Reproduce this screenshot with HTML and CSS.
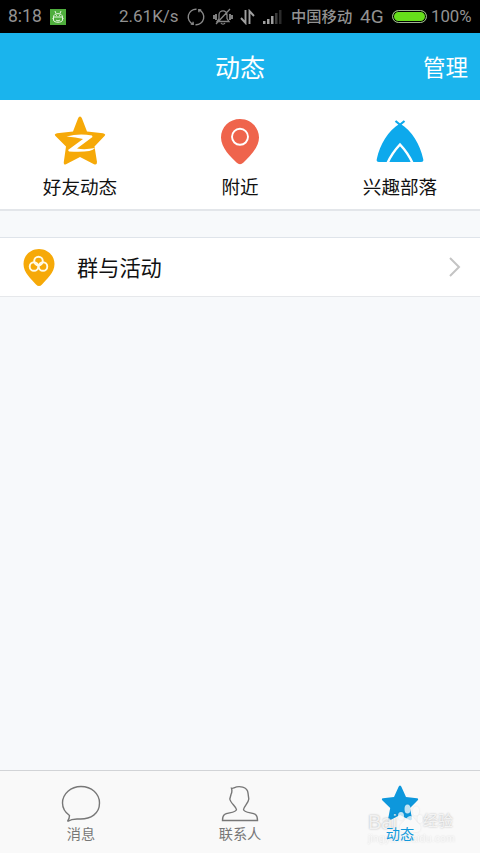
FILE: index.html
```html
<!DOCTYPE html>
<html lang="zh-CN">
<head>
  <meta charset="UTF-8" />
  <meta name="viewport" content="width=device-width, initial-scale=1.0"/>
  <title>动态</title>
  <link rel="stylesheet" href="styles.css">
</head>
<body>

  <div class="statusbar">
    <span class="time">8:18</span>
    <svg class="app-icon" width="16" height="16" viewBox="0 0 16 16">
      <rect width="16" height="16" fill="#4fae3d"/>
      <g fill="none" stroke="#e4f6df" stroke-width="1">
        <path d="M5 2l1 2.500M11 2l-1 2.500M3.500 8C3.500 3.500 12.500 3.500 12.500 8v3c0 3-9 3-9 0zM3.500 8h9M2.500 9.500h1M12.500 9.500h1M6 11c1 1 3 1 4 0"/>
        <path d="M6 6.300h1M9 6.300h1"/>
      </g>
    </svg>
    <span class="speed">2.61K/s</span>
    <svg class="sync" width="18" height="18" viewBox="0 0 18 18" fill="none" stroke="#898989" stroke-width="1.400">
      <path d="M9.500 1.300A7.700 7.700 0 0 0 6 16.100M8.500 16.700A7.700 7.700 0 0 0 12 1.900"/>
      <path d="M3.800 16l2.400.2-.2-2.400M14.200 2l-2.400-.2.2 2.400"/>
    </svg>
    <svg class="mute" width="20" height="18" viewBox="0 0 20 18" fill="none" stroke="#858585" stroke-width="1.300">
      <path d="M4 13.500h12l-2-3V7c0-5.500-8-5.500-8 0v3.500zM8 15c1 1.500 3 1.500 4 0M3 16L17 1"/>
      <path d="M1 7v4M3 6v6M17 6v6M19 7v4" stroke-width="1.900"/>
    </svg>
    <svg class="arrows" width="15" height="16" viewBox="0 0 15 16" fill="none" stroke="#a0a0a0" stroke-width="1.900">
      <path d="M5.500 1v13L1 9M9.500 15V2l4.500 5"/>
    </svg>
    <svg class="signal" width="20" height="16" viewBox="0 0 20 16">
      <g fill="#a0a0a0">
        <rect x="0" y="12" width="2.500" height="3"/>
        <rect x="4" y="10" width="2.500" height="5"/>
        <rect x="8" y="7" width="2.500" height="8"/>
      </g>
      <rect x="12" y="4" width="2.500" height="11" fill="#3d3d3d"/>
      <rect x="16" y="1" width="2.500" height="14" fill="#2b2b2b"/>
    </svg>
    <span class="carrier">中国移动</span>
    <span class="network">4G</span>
    <span class="battery"></span>
    <span class="percent">100%</span>
  </div>

  <header class="navbar">
    <h1>动态</h1>
    <span class="manage">管理</span>
  </header>

  <div class="shortcuts">
    <div class="shortcut">
      <svg width="52" height="50" viewBox="0 0 52 50">
        <path d="M26 .5Q27.200 .5 28 2.500L33 15.500L49 17.200Q52.500 18 50.500 20L40.500 30.500L43 46Q43 49.500 40 48.200L26 41L12 48.200Q9.500 49.500 9.800 46L12 30.500L1.500 20Q-.5 18 3 17.200L19 15.500L24 2.500Q24.800 .5 26 .5Z" fill="#f6a908"/>
        <path d="M12.500 20.500Q25 17 38 19.500L38.500 21L23 32.500Q31 34 41 32Q37 37 15 35.500L14 34L29 23Q22 21 12.500 20.500Z" fill="#fff"/>
      </svg>
      <span>好友动态</span>
    </div>
    <div class="shortcut">
      <svg width="52" height="50" viewBox="0 0 52 50">
        <path d="M26 3C15.500 3 7 11 7 21.500C7 32 17 41 22.500 46.500Q26 50 29.500 46.500C35 41 45 32 45 21.500C45 11 36.500 3 26 3Z" fill="#ef644c"/>
        <circle cx="26" cy="20.800" r="8" fill="none" stroke="#fff" stroke-width="1.900"/>
      </svg>
      <span>附近</span>
    </div>
    <div class="shortcut">
      <svg width="52" height="50" viewBox="0 0 52 50">
        <path d="M21.500 5L27 9.500M30.500 5L25 9.500" fill="none" stroke="#0da9ec" stroke-width="2.200"/>
        <path d="M26 7.500C38 15 46 28 49.200 43Q50 46 47 46H5Q2 46 2.800 43C6 28 14 15 26 7.500Z" fill="#0da9ec"/>
        <path d="M13.500 47Q18 37 26 28.500Q34 37 38.500 47" fill="none" stroke="#fff" stroke-width="2.500"/>
      </svg>
      <span>兴趣部落</span>
    </div>
  </div>

  <div class="row">
    <svg class="row-icon" width="32" height="40" viewBox="0 0 32 40">
      <path d="M16 2C7.500 2 .5 8.500 .5 17C.5 26 8.500 32 13 37.500Q16 40.500 19 37.500C23.500 32 31.500 26 31.500 17C31.500 8.500 24.500 2 16 2Z" fill="#f6a908"/>
      <g fill="none" stroke="#fffbe8" stroke-width="1.900">
        <circle cx="15.500" cy="14" r="4.300"/>
        <circle cx="11" cy="19.500" r="4.300"/>
        <circle cx="20" cy="19.500" r="4.300"/>
      </g>
    </svg>
    <span class="row-title">群与活动</span>
    <svg class="chevron" width="12" height="20" viewBox="0 0 12 20" fill="none" stroke="#c4c4c4" stroke-width="2">
      <path d="M1 1L10 10L1 19"/>
    </svg>
  </div>

  <nav class="tabbar">
    <div class="tab">
      <svg width="42" height="40" viewBox="0 0 42 40" fill="none" stroke="#777" stroke-width="1.400">
        <path d="M9.500 31.500C4 27.500 2.500 23 2.500 19C2.500 9.500 11 2.500 21 2.500C31.500 2.500 39.500 9.500 39.500 19C39.500 29.500 31 35.500 19 35Q12 34.500 7.500 37.500Q9.500 34.500 9.500 31.500Z"/>
      </svg>
      <span>消息</span>
    </div>
    <div class="tab">
      <svg width="42" height="40" viewBox="0 0 42 40" fill="none" stroke="#777" stroke-width="1.400">
        <path d="M12.500 4.300Q14 4.500 15 3.800C20 1.500 28.500 2.500 29 9L29.800 15C29.500 19 25 22.500 24.500 25.500C25 29 34 28.500 36.500 30.500Q38.500 32 38.500 36.500H3.500Q3.500 32 5.500 30.500C8 28.500 17 29 17.500 25.500C17 22.500 11.500 19 10.800 15L12 10.500Q13.500 7.500 12.500 4.300Z"/>
      </svg>
      <span>联系人</span>
    </div>
    <div class="tab active">
      <svg width="42" height="40" viewBox="0 0 42 40">
        <path d="M21 1.500Q22 1.500 22.500 3L27 13L38 14.200Q40 14.500 38.500 16.500L31 24L33 34.500Q33 37 30.500 36L21 31L11.500 36Q9 37 9.200 34.500L11.200 24L3.500 16.500Q2 14.500 4 14.200L15 13L19.500 3Q20 1.500 21 1.500Z" fill="#0d97dc"/>
      </svg>
      <span>动态</span>
    </div>
    <div class="watermark">
      <div class="mark-top">
        <span class="mark-bai">Bai</span>
        <svg width="27" height="34" viewBox="0 0 27 34">
          <ellipse cx="5" cy="15" rx="3" ry="4"/>
          <ellipse cx="11.500" cy="8" rx="3" ry="4.500"/>
          <ellipse cx="20" cy="10" rx="3" ry="4.500"/>
          <ellipse cx="24" cy="18" rx="2.500" ry="4"/>
          <path d="M14 15C10 16 9 20 5 23C2 27 4 32 9 31Q14 30 19 31C25 32 26 26 23 23C19 20 18 15 14 15Z"/>
        </svg>
        <span class="mark-exp">经验</span>
      </div>
      <div class="mark-url">jingyan.baidu.com</div>
    </div>
  </nav>

</body>
</html>
```
FILE: styles.css
```css
* {
  box-sizing: border-box;
}
body {
  margin: 0;
  height: 853px;
  display: flex;
  flex-direction: column;
  overflow: hidden;
  background: #f7f9fb;
  font-family: "Liberation Sans", "Noto Sans CJK SC", sans-serif;
  color: #111;
}
svg {
  display: block;
  flex-shrink: 0;
}
.statusbar {
  display: flex;
  align-items: center;
  height: 33px;
  flex-shrink: 0;
  padding-left: 8px;
  background: #000;
  color: #929292;
  font-family: Roboto, "Noto Sans CJK SC", sans-serif;
  font-size: 17px;
  line-height: 35px;
  white-space: nowrap;
}
.time {
  width: 42px;
  font-size: 17.5px;
}
.speed {
  width: 67px;
  margin-left: 53px;
}
.sync {
  margin-left: 1px;
}
.mute {
  margin-left: 8px;
}
.arrows {
  margin-left: 7px;
}
.signal {
  margin-left: 8px;
}
.carrier {
  width: 69px;
  margin-left: 8px;
  padding-top: 2px;
  font-size: 15.3px;
  font-weight: 500;
}
.network {
  width: 32px;
  font-size: 19px;
}
.battery {
  width: 35px;
  height: 13px;
  border: 1px solid #a0b494;
  border-radius: 7px;
  background: #66df1b;
  box-shadow: inset 0 0 0 1px #000;
}
.percent {
  margin-left: 4px;
  font-size: 16.8px;
}
.navbar {
  display: grid;
  grid-template-columns: 1fr auto 1fr;
  align-items: center;
  height: 67px;
  flex-shrink: 0;
  padding: 0 12px 2px;
  background: #1ab4ed;
  color: #fff;
}
.navbar h1 {
  grid-column: 2;
  margin: 0;
  font-size: 25px;
  font-weight: 400;
}
.manage {
  justify-self: end;
  font-size: 22.5px;
}
.shortcuts {
  display: grid;
  grid-template-columns: repeat(3, 1fr);
  height: 111px;
  flex-shrink: 0;
  padding-top: 16px;
  background: #fff;
  border-bottom: 2px solid #e3e6ea;
}
.shortcut {
  display: flex;
  flex-direction: column;
  align-items: center;
  gap: 8px;
  font-size: 18.6px;
  line-height: 28px;
}
.row {
  display: flex;
  align-items: center;
  height: 60px;
  flex-shrink: 0;
  margin-top: 26px;
  padding: 0 19px 0 23px;
  background: #fff;
  border-top: 1px solid #dfe4ea;
  border-bottom: 1px solid #e6e8eb;
}
.row-title {
  flex: 1;
  margin-left: 22px;
  padding-bottom: 1px;
  font-size: 21.2px;
}
.tabbar {
  position: relative;
  display: grid;
  grid-template-columns: repeat(3, 1fr);
  height: 83px;
  flex-shrink: 0;
  margin-top: auto;
  padding-top: 13px;
  background: #f9f9f9;
  border-top: 1px solid #d2d4d7;
}
.tab {
  display: flex;
  flex-direction: column;
  align-items: center;
  color: #777;
  font-size: 14.2px;
  line-height: 20px;
}
.tab:first-child {
  padding-left: 2px;
}
.active {
  color: #1199dc;
}
.active span {
  position: relative;
  z-index: 2;
}
/* watermark lies over the last tab */
.watermark {
  position: absolute;
  left: 368px;
  top: 28px;
  width: 90px;
  color: rgba(255, 255, 255, 0.75);
  fill: rgba(255, 255, 255, 0.75);
  text-shadow: 0 0 2px rgba(0, 0, 0, 0.3);
}
.mark-top {
  display: flex;
  align-items: center;
  height: 38px;
}
.mark-top svg {
  filter: drop-shadow(0 0 1px rgba(0, 0, 0, 0.12));
}
.mark-bai {
  width: 28px;
  padding-top: 8px;
  font-size: 20px;
}
.mark-exp {
  padding-top: 6px;
  font-size: 15px;
  line-height: 20px;
}
.mark-url {
  font-size: 10.8px;
  line-height: 10px;
  margin-top: -4px;
  opacity: 0.5;
}
```
